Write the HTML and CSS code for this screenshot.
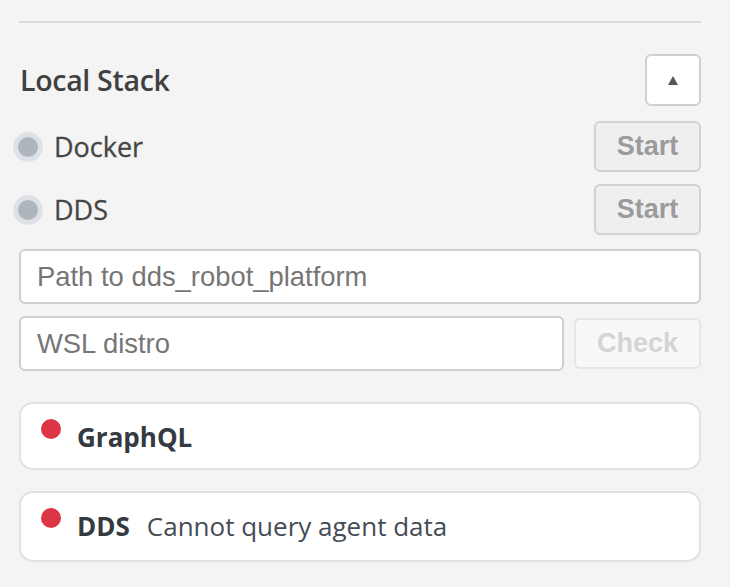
FILE: index.html
```html
<!DOCTYPE html>
<html>
<head>
<meta charset="utf-8">
<link rel="stylesheet" href="styles.css">
</head>
<body>
<div class="panel">
  <div class="divider"></div>
  <div class="header">
    <h2 class="title">Local Stack</h2>
    <button class="toggle" type="button"><svg width="10" height="9" viewBox="0 0 10 9"><path d="M5 0 L10 9 L0 9 Z" fill="#555"/></svg></button>
  </div>
  <div class="service-row">
    <label class="radio-label"><span class="radio"></span><span>Docker</span></label>
    <button class="btn start" type="button" disabled>Start</button>
  </div>
  <div class="service-row second">
    <label class="radio-label"><span class="radio"></span><span>DDS</span></label>
    <button class="btn start" type="button" disabled>Start</button>
  </div>
  <input class="field full" type="text" placeholder="Path to dds_robot_platform">
  <div class="check-row">
    <input class="field grow" type="text" placeholder="WSL distro">
    <button class="btn check" type="button" disabled>Check</button>
  </div>
  <div class="status-card first">
    <span class="dot"></span>
    <div class="status-text"><strong>GraphQL</strong></div>
  </div>
  <div class="status-card">
    <span class="dot"></span>
    <div class="status-text"><strong>DDS</strong><span class="desc">Cannot query agent data</span></div>
  </div>
</div>
</body>
</html>
```
FILE: styles.css
```css
html, body {
  margin: 0;
  padding: 0;
  background: #f4f4f4;
}
body {
  font-family: "Open Sans", "Noto Sans", sans-serif;
  color: #444;
}
.panel {
  padding: 21px 29px 0 19px;
  display: flex;
  flex-direction: column;
}
.divider {
  height: 2px;
  background: #dcdcdc;
}
.header {
  display: flex;
  align-items: center;
  justify-content: space-between;
  margin-top: 31px;
}
.title {
  margin: 0 0 0 1px;
  font-size: 28.5px;
  font-weight: 600;
  color: #404040;
  letter-spacing: -0.3px;
}
.toggle {
  width: 56px;
  height: 52px;
  background: #fff;
  border: 2px solid #cfcfcf;
  border-radius: 6px;
  display: flex;
  align-items: center;
  justify-content: center;
  padding: 0;
}
.service-row {
  display: flex;
  align-items: center;
  justify-content: space-between;
  margin-top: 15px;
}
.service-row.second {
  margin-top: 12px;
}
.radio-label {
  display: flex;
  align-items: center;
  gap: 11px;
  font-size: 27px;
  color: #454545;
  margin-left: -6px;
  -webkit-text-stroke: 0.3px #454545;
}
.radio {
  width: 20px;
  height: 20px;
  border-radius: 50%;
  background: #adb5bd;
  border: 5px solid #dee2e6;
}
.btn {
  font-family: "Liberation Sans", Arial, sans-serif;
  font-weight: bold;
  font-size: 27px;
  border-radius: 6px;
  padding: 0;
}
.start {
  width: 107px;
  height: 51px;
  background: #efefef;
  border: 2px solid #d2d2d2;
  color: #9b9b9b;
}
.field {
  font-family: "Liberation Sans", Arial, sans-serif;
  font-size: 27.4px;
  height: 55px;
  box-sizing: border-box;
  background: #fff;
  border: 2px solid #cfcfcf;
  border-radius: 6px;
  padding: 0 16px;
  color: #333;
}
.field::placeholder {
  color: #767676;
}
.full {
  margin-top: 14px;
  width: 100%;
}
.check-row {
  display: flex;
  align-items: center;
  gap: 10px;
  margin-top: 12px;
}
.grow {
  flex: 1;
  min-width: 0;
}
.check {
  width: 127px;
  height: 51px;
  background: #f8f8f8;
  border: 2px solid #e6e6e6;
  color: #d4d4d4;
}
.status-card {
  display: flex;
  align-items: flex-start;
  background: #fff;
  border: 2px solid #dee2e6;
  border-radius: 14px;
  padding: 15px 20px 0 20px;
  height: 68px;
  box-sizing: border-box;
  margin-top: 21px;
}
.status-card.first {
  margin-top: 31px;
}
.status-card + .status-card {
  height: 71px;
}
.dot {
  flex: none;
  width: 20px;
  height: 20px;
  border-radius: 50%;
  background: #dc3545;
  margin-right: 16px;
}
.status-text {
  font-size: 26px;
  line-height: 1;
  margin-top: 5px;
  color: #343a40;
}
.status-text strong {
  font-weight: 700;
}
.desc {
  margin-left: 17px;
  color: #464c54;
}
```
